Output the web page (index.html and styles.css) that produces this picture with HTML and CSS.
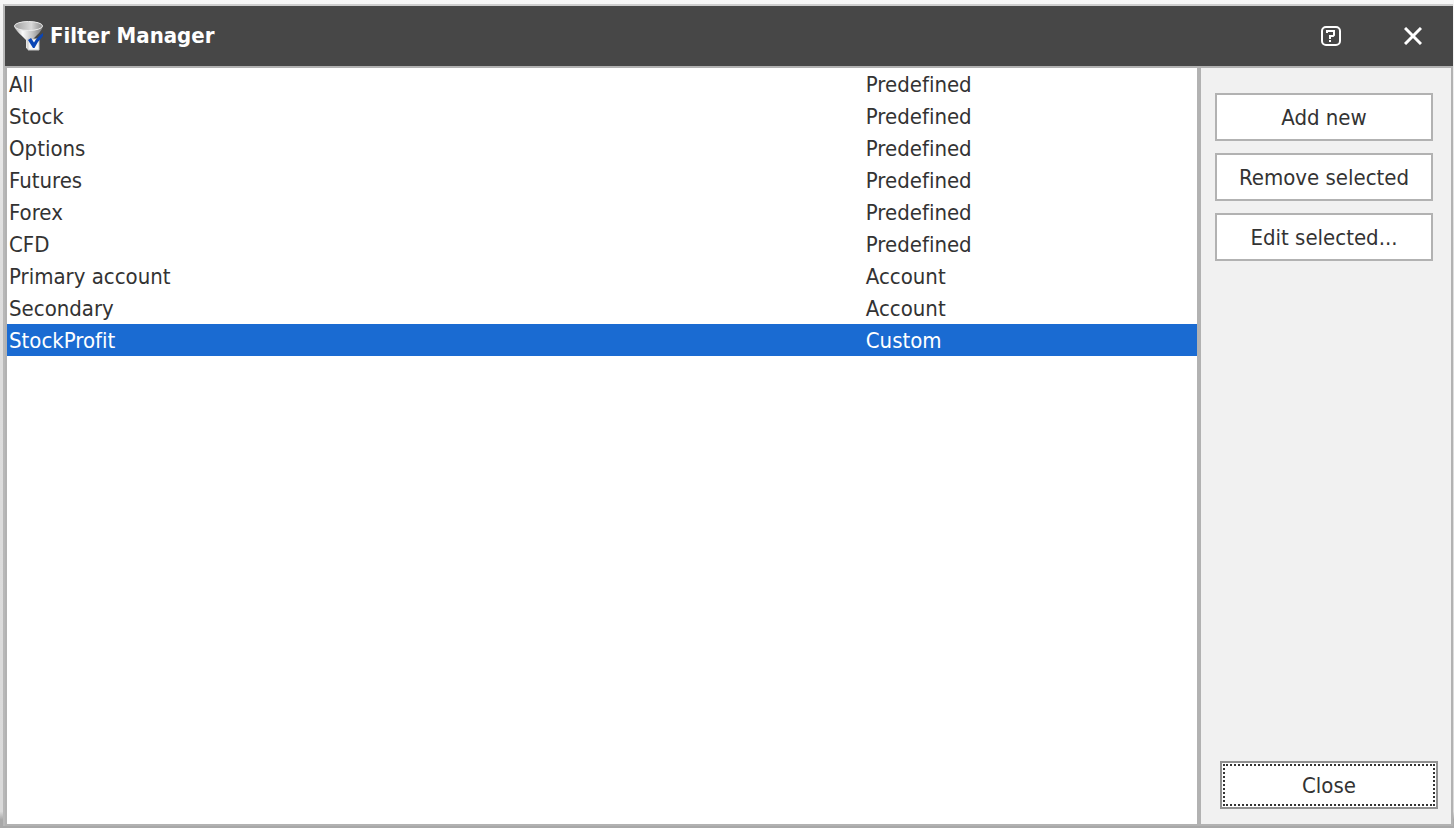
FILE: index.html
```
<!DOCTYPE html>
<html lang="en">
<head>
    <meta charset="UTF-8">
    <meta name="viewport" content="width=device-width, initial-scale=1.0">
    <title>Filter Manager</title>
    <link rel="stylesheet" href="styles.css">
</head>
<body>
    <div class="window">
        <header class="titlebar">
            <svg class="app-icon" width="30" height="32" viewBox="0 0 30 32" aria-hidden="true">
                <defs>
                    <linearGradient id="cone" x1="0" x2="1" y1="0" y2="0">
                        <stop offset="0" stop-color="#a8a8a8"/>
                        <stop offset="0.3" stop-color="#fafafa"/>
                        <stop offset="0.65" stop-color="#c0c0c0"/>
                        <stop offset="1" stop-color="#777"/>
                    </linearGradient>
                    <linearGradient id="rim" x1="0" x2="1" y1="0" y2="0">
                        <stop offset="0" stop-color="#a0a0a0"/>
                        <stop offset="0.6" stop-color="#dadada"/>
                        <stop offset="1" stop-color="#8a8a8a"/>
                    </linearGradient>
                </defs>
                <path d="M0 6 C1 10 6 14 12 20 V28 Q14 30 18 29 V20 C24 14 28 11 29 6 Z" fill="url(#cone)"/>
                <ellipse cx="14.5" cy="6" rx="14" ry="4.5" fill="url(#rim)" stroke="#ececec"/>
                <path d="M14 19 H25 V30 H14 Z" fill="#f7f7f7" stroke="#c8c8c8"/>
                <path d="M14 20 L17 18 L20 22.5 Q23 17 29 13 L29 16 Q24 21 20.5 28 H19 Z" fill="#0a45b5"/>
            </svg>
            <h1>Filter Manager</h1>
            <button type="button" class="icon-button" aria-label="Help">
                <svg width="20" height="20" viewBox="0 0 20 20" fill="none" stroke="#fff" stroke-width="2">
                    <rect x="1" y="1" width="18" height="18" rx="4"/>
                    <path d="M6 7 V5 H13 V9 L12 10 H9 V13 M8 15 H10"/>
                </svg>
            </button>
            <button type="button" class="icon-button" aria-label="Close window">
                <svg width="18" height="18" viewBox="0 0 18 18" fill="none" stroke="#fff" stroke-width="3">
                    <path d="M1 1 L17 17 M17 1 L1 17"/>
                </svg>
            </button>
        </header>
        <div class="content">
            <main class="filters">
                <table>
                    <tbody>
                        <tr><td class="name">All</td><td>Predefined</td></tr>
                        <tr><td class="name">Stock</td><td>Predefined</td></tr>
                        <tr><td class="name">Options</td><td>Predefined</td></tr>
                        <tr><td class="name">Futures</td><td>Predefined</td></tr>
                        <tr><td class="name">Forex</td><td>Predefined</td></tr>
                        <tr><td class="name">CFD</td><td>Predefined</td></tr>
                        <tr><td class="name">Primary account</td><td>Account</td></tr>
                        <tr><td class="name">Secondary</td><td>Account</td></tr>
                        <tr class="selected"><td class="name">StockProfit</td><td>Custom</td></tr>
                    </tbody>
                </table>
            </main>
            <aside class="actions">
                <button type="button" class="action">Add new</button>
                <button type="button" class="action">Remove selected</button>
                <button type="button" class="action">Edit selected...</button>
                <button type="button" class="action close"><span>Close</span></button>
            </aside>
        </div>
    </div>
</body>
</html>
```
FILE: styles.css
```
* {
    box-sizing: border-box;
}

body {
    margin: 0;
    height: 100vh;
    padding: 4px 1px 2px 3px;
    background: linear-gradient(#f6f6f6, #dedede 30%, #dadada 98%, #a8a8a8 99%);
    font-family: "DejaVu Sans Condensed", "Noto Sans", sans-serif;
    font-size: 22px;
    font-variant-ligatures: none;
    color: #333;
}

.window {
    display: flex;
    flex-direction: column;
    height: 100%;
    border-top: 2px solid #cdcdcd;
    border-left: 2px solid #b8b8b8;
    background: #b2b2b2;
}

.titlebar {
    display: flex;
    align-items: center;
    height: 60px;
    padding: 0 20px 0 9px;
    background: #474747;
    color: #fff;
}

.titlebar h1 {
    flex: 1;
    margin: 0 0 0 6px;
    font-size: 22px;
    line-height: 32px;
}

.icon-button {
    display: flex;
    align-items: center;
    justify-content: center;
    width: 40px;
    height: 40px;
    margin-left: 42px;
    padding: 0;
    border: none;
    background: none;
}

.content {
    display: flex;
    flex: 1;
    gap: 4px;
    padding: 2px;
}

.filters {
    flex: 1;
    background: #fff;
}

table {
    width: 100%;
    border-collapse: collapse;
    table-layout: fixed;
}

td {
    height: 32px;
    padding: 2px 2px 0;
    line-height: 30px;
}

.name {
    width: 72%;
}

.selected {
    background: #1a6bd2;
    color: #fff;
}

.actions {
    display: flex;
    flex-direction: column;
    gap: 12px;
    width: 250px;
    padding: 25px 13px 15px 14px;
    background: #f1f1f1;
}

.action {
    width: 218px;
    height: 48px;
    padding: 0;
    border: 2px solid #b2b2b2;
    background: #fff;
    color: inherit;
    font: inherit;
}

.close {
    margin-top: auto;
    align-self: flex-end;
    padding: 1px;
    border-color: #919191;
}

/* focus ring */
.close span {
    display: flex;
    align-items: center;
    justify-content: center;
    height: 100%;
    border: 2px dotted #333;
}
```
